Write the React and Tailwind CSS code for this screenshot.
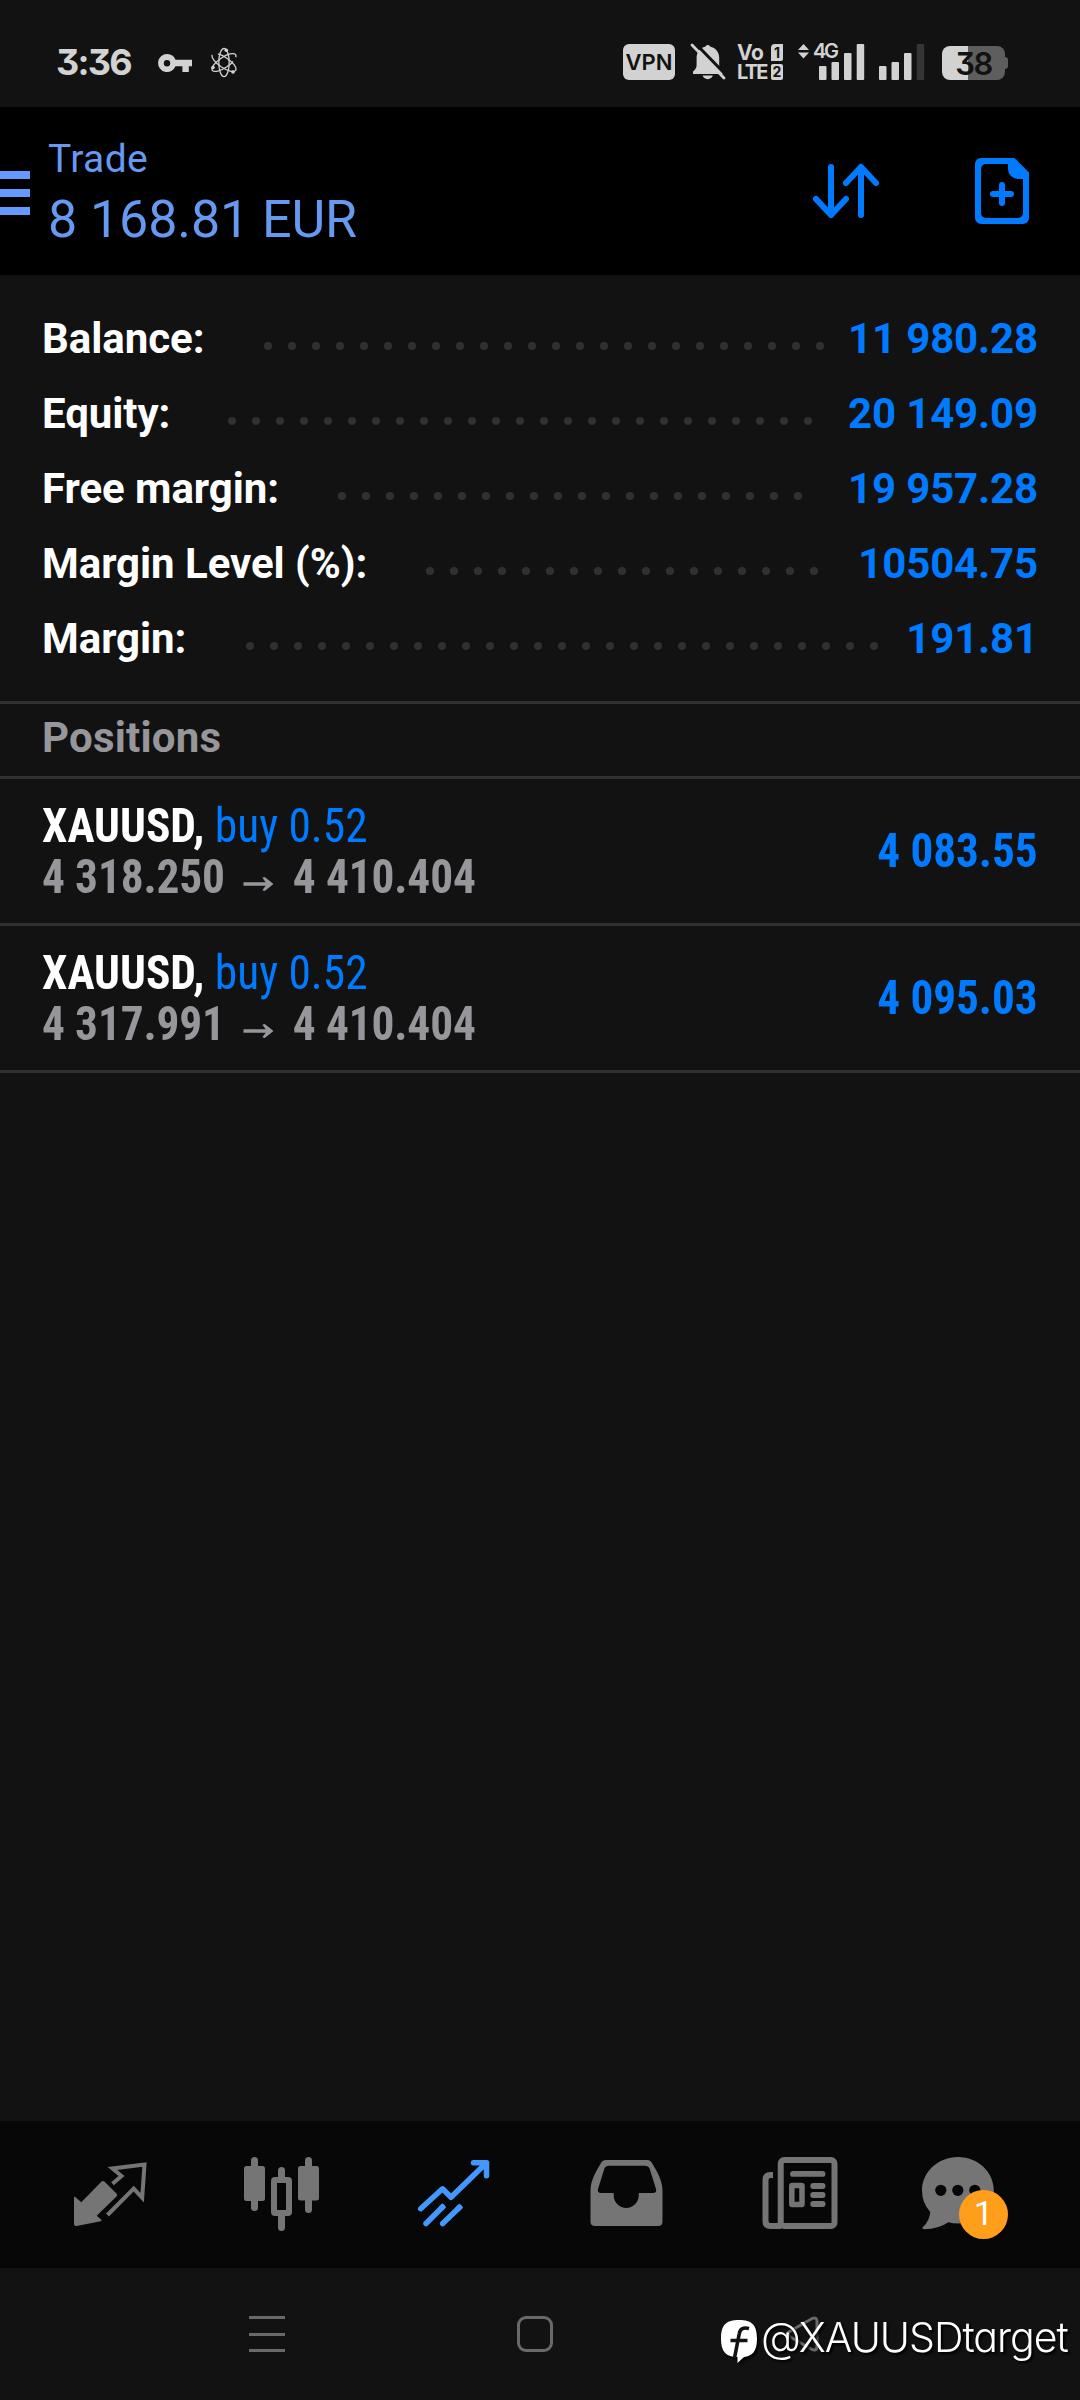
import React from 'react';

const account = [
  { label: 'Balance:', value: '11 980.28', width: 'w-[222px]', dots: 24 },
  { label: 'Equity:', value: '20 149.09', width: 'w-[186px]', dots: 25 },
  { label: 'Free margin:', value: '19 957.28', width: 'w-[296px]', dots: 20 },
  { label: 'Margin Level (%):', value: '10504.75', width: 'w-[384px]', dots: 17 },
  { label: 'Margin:', value: '191.81', width: 'w-[204px]', dots: 27 },
];

const positions = [
  { symbol: 'XAUUSD', side: 'buy 0.52', open: '4 318.250', current: '4 410.404', profit: '4 083.55' },
  { symbol: 'XAUUSD', side: 'buy 0.52', open: '4 317.991', current: '4 410.404', profit: '4 095.03' },
];

const SignalBars = ({ weak }) => (
  <svg width="46" height="36" viewBox="0 0 46 36" fill="currentColor">
    <rect x="0" y="22" width="7.5" height="14" rx="1" />
    <rect x="12.5" y="18" width="7.5" height="18" rx="1" />
    <rect x="25" y="9" width="7.5" height="27" rx="1" />
    <rect x="37.7" y="0" width="7.5" height="36" rx="1" fill={weak ? '#353535' : 'currentColor'} />
  </svg>
);

const StatusBar = () => (
  <div className="h-[107px] flex items-start text-[#d2d2d2] font-['Inter',sans-serif]">
    <div className="ml-[56px] mt-[44px] w-[102px] text-[36px] leading-[36px] font-bold tracking-[-1.8px] [font-feature-settings:'cv09']">3:36</div>

    {/* VPN key */}
    <svg className="mt-[54px]" width="34" height="18" viewBox="0 0 34 18" fill="currentColor">
      <path fillRule="evenodd" d="M9 0a9 9 0 0 1 8.5 5.8H34v6.4h-3.2V18h-6.4v-5.8h-6.9A9 9 0 1 1 9 0Zm0 6a3.2 3.2 0 1 0 0 6.4A3.2 3.2 0 0 0 9 6Z" />
    </svg>

    {/* Atom */}
    <svg className="ml-[19px] mt-[47px]" width="26" height="31" viewBox="0 0 26 31" fill="none" stroke="currentColor" strokeWidth="1.3">
      <ellipse cx="13" cy="15.5" rx="5.2" ry="14" />
      <ellipse cx="13" cy="15.5" rx="5.2" ry="14" transform="rotate(-56 13 15.5)" strokeDasharray="47 6" />
      <ellipse cx="13" cy="15.5" rx="5.2" ry="14" transform="rotate(56 13 15.5)" strokeDasharray="50 5" />
      <g fill="currentColor" stroke="none">
        <circle cx="15.3" cy="3.2" r="1.8" />
        <circle cx="2" cy="20.5" r="1.8" />
        <circle cx="22" cy="25" r="1.8" />
      </g>
    </svg>

    <div className="ml-[386px] mt-[44px] w-[52px] h-[36px] rounded-[6px] bg-[#d2d2d2] text-[#121212] text-[22px] leading-[37px] font-semibold text-center">VPN</div>

    {/* Muted bell */}
    <svg className="ml-[15px] mt-[43px]" width="36" height="37" viewBox="0 0 36 37">
      <path fill="currentColor" d="M15.6 3.4a2.4 2.4 0 0 1 4.4 0c6 1.4 9.2 6 9.2 11.4v7.4c0 3 1.5 4.6 3.6 6.2v2.5H3v-2.5c2-1.6 3.6-3.2 3.6-6.2v-7.4c0-5.4 3.2-10 9-11.4ZM12.6 32.6h10.2c-.6 2-2.6 3.6-5.1 3.6s-4.5-1.6-5.1-3.6Z" />
      <path stroke="#121212" strokeWidth="3" d="M5 0 36 32" />
      <path stroke="currentColor" strokeWidth="2.8" strokeLinecap="round" d="M2 2 34 35" />
    </svg>

    {/* VoLTE on both SIM cards */}
    <div className="ml-[11px] mt-[44px] w-[46px] flex flex-col text-[21px] leading-[17px] font-bold">
      <div className="flex justify-between">
        <span className="tracking-[-0.5px]">Vo</span>
        <span className="w-[12px] h-[17px] rounded-tl-[4px] rounded-br-[2px] bg-[#d2d2d2] text-[#121212] text-[14px] leading-[17px] text-center">1</span>
      </div>
      <div className="mt-[3px] flex justify-between">
        <span className="w-[32px] text-[20px] tracking-[-1.8px]">LTE</span>
        <span className="w-[12px] h-[16px] shrink-0 rounded-[2px] bg-[#d2d2d2] text-[#121212] text-[14px] leading-[16px] text-center">2</span>
      </div>
    </div>

    <div className="relative ml-[36px] mt-[44px] flex gap-[14px]">
      <SignalBars />
      <SignalBars weak />
      <svg className="absolute -left-[21px] top-0" width="11" height="15" viewBox="0 0 11 15" fill="currentColor">
        <path d="M5.5 0 11 6H0ZM0 8.5h11L5.5 14.5Z" />
      </svg>
      <span className="absolute -left-[6px] -top-[2px] text-[20px] leading-[18px] font-semibold tracking-[-2.4px]">4G</span>
    </div>

    <div className="ml-[17px] mt-[46px] flex items-center">
      <div className="w-[63px] h-[34px] rounded-[8px] bg-[linear-gradient(to_right,#d2d2d2_26px,#5e5e5e_26px)] text-[#121212] text-[31px] leading-[35px] font-semibold text-center tracking-[-1.5px] [font-feature-settings:'cv09']">38</div>
      <div className="w-[3px] h-[12px] rounded-r-[3px] bg-[#5e5e5e]" />
    </div>
  </div>
);

const Header = () => (
  <header className="h-[168px] bg-black flex items-start text-[#6699f0]">
    <div className="mt-[64px] flex flex-col gap-[10px]">
      <div className="w-[30px] h-2 bg-[#6699ff]" />
      <div className="w-[30px] h-2 bg-[#6699ff]" />
      <div className="w-[30px] h-2 bg-[#6699ff]" />
    </div>
    <div className="ml-[18px] mt-[29px] w-[762px]">
      <div className="text-[39px] leading-[46px] tracking-[0.4px]">Trade</div>
      <div className="text-[52px] leading-[60px] mt-[8px] tracking-[-0.1px]">8 168.81 EUR</div>
    </div>
    <svg className="mt-[54px]" width="72" height="60" viewBox="0 0 72 60" fill="none" stroke="#007aff" strokeWidth="6" strokeLinecap="round" strokeLinejoin="round">
      <path d="M21 6v48M6 38l15 16 15-16M51 54V6M36 22 51 6l15 16" />
    </svg>
    <svg className="ml-[93px] mt-[51px]" width="54" height="66" viewBox="0 0 54 66" fill="#007aff">
      <path fillRule="evenodd" d="M6 0h33.5L54 14.500V60a6 6 0 0 1-6 6H6a6 6 0 0 1-6-6V6a6 6 0 0 1 6-6Zm5 6a5 5 0 0 0-5 5v44a5 5 0 0 0 5 5h32a5 5 0 0 0 5-5V21h-5A10 10 0 0 1 33 11V6Z" />
      <path d="M27 27v18M18 36h18" stroke="#007aff" strokeWidth="6" strokeLinecap="round" />
    </svg>
  </header>
);

const AccountSummary = () => (
  <section className="h-[426px] pt-[26px] px-[42px] text-[42px] font-bold">
    {account.map(({ label, value, width, dots }) => (
      <div key={label} className="h-[75px] flex items-center whitespace-nowrap">
        <span className={`${width} shrink-0 tracking-[-0.05px] text-white`}>{label}</span>
        <div className="mt-[15px] flex gap-4">
          {Array.from({ length: dots }, (_, i) => (
            <i key={i} className="size-2 rounded-full bg-[#303030]" />
          ))}
        </div>
        <span className="ml-auto tracking-[-0.15px] text-[#007aff]">{value}</span>
      </div>
    ))}
  </section>
);

const PositionRow = ({ symbol, side, open, current, profit }) => (
  <div className="h-[147px] px-[42px] border-b-[3px] border-[#303030] flex items-start justify-between text-[48px] leading-[51px] font-bold whitespace-nowrap [font-stretch:75%]">
    <div className="mt-[21px] origin-left scale-x-[0.945]">
      <div className="text-white">
        {symbol}, <span className="font-normal text-[#007aff]">{side}</span>
      </div>
      <div className="flex tracking-[-0.15px] text-[#96969b]">
        {open}
        <svg className="mx-[20px] mt-[26px]" width="32" height="14" viewBox="0 0 31 14" preserveAspectRatio="none" fill="currentColor">
          <path d="M0 5.300h23L19.500.8 22 0l9 7-9 7-2.500-.8L23 8.700H0Z" />
        </svg>
        {current}
      </div>
    </div>
    <div className="mt-[46px] origin-right scale-x-[0.94] text-[#007aff]">{profit}</div>
  </div>
);

const QuotesIcon = () => (
  <svg width="96" height="96" viewBox="0 0 96 96" fill="currentColor">
    <path d="M12 51.500q0-1.500 1.200-.4l6.100 5.200 20-20.500q1.700-1.700 3.400 0L54.500 47.500q1.500 1.500 0 3L34.700 69.800l4.600 3.900q1 1-.6 1.500L14.500 80Q12 80.300 12 78Z" />
    <path d="M50.500 37.800 59.500 30l-9-7.500 32-4-2.300 33.200-8.500-9L45.500 69" fill="none" stroke="currentColor" strokeWidth="4" />
  </svg>
);

const ChartIcon = () => (
  <svg width="96" height="96" viewBox="0 0 96 96" fill="currentColor">
    <rect x="17" y="11" width="7" height="54" rx="3.5" />
    <rect x="10" y="20" width="21" height="35" rx="2.5" />
    <rect x="44" y="21" width="7" height="64" rx="3.5" />
    <rect x="40" y="34" width="15" height="33" rx="1" fill="#070707" stroke="currentColor" strokeWidth="6" />
    <rect x="71" y="11" width="7" height="56" rx="3.5" />
    <rect x="64" y="20" width="21" height="34.5" rx="2.5" />
  </svg>
);

const TradeIcon = () => (
  <svg width="96" height="96" viewBox="0 0 96 96" fill="none" stroke="#4398ff" strokeWidth="5.5" strokeLinecap="round" strokeLinejoin="round">
    <path d="M14.700 62.700 36.500 42.800l8.500 8.500 35.500-34.500M67.500 16.800h13v13" />
    <path d="M20 77.500l16.500-16.500M36.700 77.500 53.500 61.300" />
    <path d="M34 63.500l4.200-4.200M51 63.700l4.300-4.200" strokeLinecap="butt" />
  </svg>
);

const InboxIcon = () => (
  <svg width="96" height="96" viewBox="0 0 96 96" fill="currentColor">
    <path fillRule="evenodd" d="M28 14h41q3.500 0 5 3c6 10 10.500 18 10.500 28v30.500q0 4.500-4.500 4.500H17q-4.500 0-4.500-4.500V45c0-10 4.500-18 10.500-28q1.500-3 5-3Zm2.500 5.700q-3 0-4 2.500L20 43q-1 4 3 4h12.700v2.500a12.500 12.500 0 0 0 25 0V47H75q4 0 3-4l-6.500-20.800q-1-2.500-4-2.500Z" />
  </svg>
);

const NewsIcon = () => (
  <svg width="96" height="96" viewBox="0 0 96 96" fill="none" stroke="currentColor" strokeWidth="6">
    <rect x="30.7" y="14" width="53.8" height="66" rx="3.5" />
    <path d="M23 29h-2.500q-5 0-5 5v41q0 5 5 5H31" />
    <rect x="41.8" y="39.5" width="10.2" height="19" rx=".5" strokeWidth="5.5" />
    <path d="M43 27.900h29.500M63.200 40h9.400M63.200 49h9.400M63.200 58h9.400" strokeWidth="5.8" strokeLinecap="round" />
  </svg>
);

const ChatIcon = () => (
  <div className="relative">
    <svg className="overflow-visible" width="96" height="96" viewBox="0 0 96 96" fill="currentColor">
      <path d="M36 11C56 11 71.800 26 71.800 44.500S56 77.500 36 77.500q-5 0-9.700-1.200Q17 83 2 83.200-.8 82.500 1 81q6.500-6 7.300-15Q0 57 0 44.500C0 26 16 11 36 11Z" />
      <g fill="#070707">
        <circle cx="18.8" cy="44.3" r="5.6" />
        <circle cx="35.8" cy="44.3" r="5.6" />
        <circle cx="52.8" cy="44.3" r="5.6" />
      </g>
    </svg>
    <span className="absolute left-[37px] top-[44px] size-[49px] rounded-full bg-[#ff9e1b] text-white text-[34px] leading-[47px] text-center">1</span>
  </div>
);

const tabs = [QuotesIcon, ChartIcon, TradeIcon, InboxIcon, NewsIcon, ChatIcon];

const TabBar = () => (
  <nav className="h-[147px] px-6 pt-[25px] bg-[#070707] text-[#757575] flex items-start">
    {tabs.map((Icon, i) => (
      <div key={i} className="w-[172px] flex justify-center">
        <Icon />
      </div>
    ))}
  </nav>
);

const SystemNav = () => (
  <div className="relative h-[132px] pt-[48px] flex items-start text-[#696969]">
    <div className="ml-[249px] w-[36px] h-[36px] flex flex-col justify-between">
      <div className="h-[3px] bg-[#696969]" />
      <div className="h-[3px] bg-[#696969]" />
      <div className="h-[3px] bg-[#696969]" />
    </div>
    <div className="ml-[232px] w-[36px] h-[36px] rounded-[9px] border-[3px] border-[#696969]" />
    <svg className="ml-[232px]" width="36" height="36" viewBox="0 0 36 36" fill="none" stroke="currentColor" strokeWidth="3">
      <path d="M4.500 15.500 27.500 2.300Q31.500.8 32 5v26q-.5 4.200-4.500 2.700L4.500 20.500q-3-2.500 0-5Z" />
    </svg>

    {/* Channel watermark */}
    <div className="absolute left-[721px] top-[52px] flex text-white drop-shadow-[2px_2px_1px_#000]">
      <svg width="36" height="43" viewBox="0 0 36 43">
        <path fill="currentColor" d="M18 0C31 0 36 5 36 18.500S31 36 23 37L16.500 43v-6C5 37 0 32 0 18.500S5 0 18 0Z" />
        <path fill="none" stroke="#121212" strokeWidth="3.6" d="M28 8.500c-6-1.500-9 .5-9.800 5.500L13.500 38M9.500 20.500h17" />
      </svg>
      <span className="ml-[4px] -mt-[8px] font-['Inter',sans-serif] font-[350] text-[41px] leading-[50px] tracking-[-1px] [font-feature-settings:'cv11']">@XAUUSDtarget</span>
    </div>
  </div>
);

export default function App() {
  return (
    <div className="w-[1080px] h-[2400px] bg-[#121212] flex flex-col overflow-hidden font-['Roboto',sans-serif]">
      <StatusBar />
      <Header />
      <AccountSummary />
      <div className="h-[78px] px-[42px] border-y-[3px] border-[#303030] text-[42px] leading-[68px] font-bold tracking-[0.2px] text-[#96969b]">Positions</div>
      {positions.map((position) => (
        <PositionRow key={position.open} {...position} />
      ))}
      <div className="flex-1" />
      <TabBar />
      <SystemNav />
    </div>
  );
}
